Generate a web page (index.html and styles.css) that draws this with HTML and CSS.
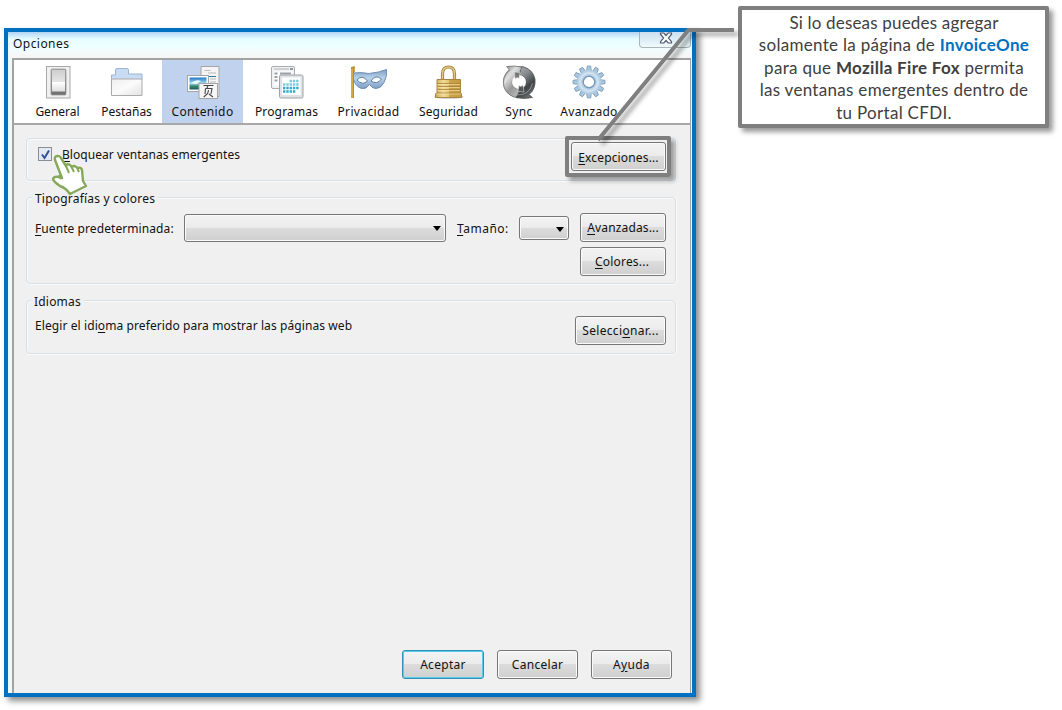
FILE: index.html
```html
<!DOCTYPE html>
<html lang="es">
<head>
<meta charset="utf-8">
<title>Opciones</title>
<link rel="stylesheet" href="styles.css">
</head>
<body>
<main class="page">
  <section class="window">
    <header class="titlebar">
      <h1 class="title">Opciones</h1>
      <div class="close"><svg width="14" height="12" viewBox="0 0 14 12"><path d="M1.500 1h3.300L7 3.500 9.200 1h3.300v1.200L9.400 6l3.100 3.600V11H9.200L7 8.500 4.800 11H1.500V9.600L4.600 6 1.500 2.200z" fill="#fff" stroke="#515a70" stroke-width="1.200"/></svg></div>
    </header>
    <div class="client">
      <nav class="tabs">
        <div class="tab t-general">
          <svg width="34" height="34" viewBox="0 0 34 34"><defs><linearGradient id="sw" x2="0" y2="1"><stop offset="0" stop-color="#cfcfcf"/><stop offset=".55" stop-color="#e4e4e4"/><stop offset=".57" stop-color="#fff"/><stop offset="1" stop-color="#dedede"/></linearGradient><linearGradient id="sb" x2="0" y2="1"><stop offset="0" stop-color="#aaa"/><stop offset="1" stop-color="#6e6e6e"/></linearGradient></defs><rect x="5.500" y="1.500" width="23.500" height="31.500" fill="#f0f0f0" stroke="#a9a9a9"/><rect x="10" y="4" width="15" height="26" rx="1" fill="url(#sb)" stroke="#999" stroke-width=".8"/><rect x="11" y="5" width="13" height="21.500" fill="url(#sw)"/></svg>
          <span>General</span></div>
        <div class="tab t-tabs">
          <svg width="34" height="34" viewBox="0 0 34 34"><defs><linearGradient id="fo" x2="1" y2="1"><stop offset="0" stop-color="#eee"/><stop offset=".5" stop-color="#fbfbfb"/><stop offset="1" stop-color="#e2e2e2"/></linearGradient></defs><path d="M1.500 14.500V10H5.500V5q0-1.500 1.500-1.500H17q1.500 0 1.500 1.500V9H32V14.500z" fill="#c9dcf3" stroke="#9db5d3"/><path d="M1.500 14H32V30.500H1.500z" fill="url(#fo)" stroke="#aaa"/></svg>
          <span>Pestañas</span></div>
        <div class="tab t-content selected">
          <svg width="34" height="34" viewBox="0 0 34 34"><defs><linearGradient id="ph" x2="0" y2="1"><stop offset="0" stop-color="#2078c4"/><stop offset=".5" stop-color="#a8dff5"/><stop offset=".7" stop-color="#3c8c6c"/><stop offset="1" stop-color="#1c5a62"/></linearGradient></defs><path d="M15 1.500h18V31.500H15z" fill="#f4f4f4" stroke="#a5a5a5"/><path d="M18.500 5.500h6M22 8h8M24 14h6M24 17h6" stroke="#bbb"/><path d="M22 11.500h8" stroke="#287e99"/><rect x="1.500" y="10.500" width="21" height="16" fill="#fff" stroke="#a5a5a5"/><rect x="3.500" y="12.500" width="17" height="12" fill="url(#ph)"/><path d="M5 18q5-4 10-2l-5 3z" fill="#effaff"/><rect x="13" y="18.500" width="18.500" height="15" fill="#f6f6f6" stroke="#a5a5a5"/><path d="M17.500 20.500h10M22 20.500l-1 2.500M19.500 23.500h6.500l-1 5.500M19.500 23.500l-.5 5.500M22.500 25l-.8 3.500-4 3.500M23 29l4 3" fill="none" stroke="#444" stroke-width="1.100"/></svg>
          <span>Contenido</span></div>
        <div class="tab t-apps">
          <svg width="34" height="34" viewBox="0 0 34 34"><rect x="1.500" y="1.500" width="23" height="22" rx="1.500" fill="#f0f1f2" stroke="#a9abad"/><path d="M4 4h15" stroke="#c4c4c4" stroke-width="1.500"/><path d="M20 4h3" stroke="#777" stroke-width="1.500"/><rect x="4" y="6.500" width="18" height="14" fill="#fff"/><path d="M4.500 8.500h3M10 8.500h11M4.500 12h3M4.500 15.500h3" stroke="#9a9fa8" stroke-width="1.800"/><rect x="9.500" y="10" width="23.500" height="23" rx="1.500" fill="#dfe3e6" stroke="#9da2a6"/><path d="M12 12.500h18.500v17.500h-18.500z" fill="#fff"/><g stroke="#7ccbdc" stroke-width="2.400" stroke-dasharray="2.400 .9"><path d="M19.500 16h10M13 19.500h16"/></g><g stroke="#35a9cb" stroke-width="2.400" stroke-dasharray="2.400 .9"><path d="M13 23h16M13 26.500h12.500"/></g></svg>
          <span>Programas</span></div>
        <div class="tab t-privacy">
          <svg width="38" height="34" viewBox="0 0 38 34"><defs><linearGradient id="ma" x2="0" y2="1"><stop offset="0" stop-color="#7d9cc0"/><stop offset=".45" stop-color="#b9d2ea"/><stop offset="1" stop-color="#7c9dc2"/></linearGradient></defs><path d="M3 8Q11 7 19 8.500 29 7.500 36.500 4.500q1 6-2.500 13-3 6-8 6-4 0-6.500-4-3 5-8 4-6-2-8-9z" fill="url(#ma)" stroke="#6f8fb5"/><path d="M7 15q5-6 10.500 1-5 5-10.500-1zM21 16q4.500-7 10.500-2-4.500 6-10.500 2z" fill="#fff" stroke="#5d7fa6"/><path d="M2.500 3v30" stroke="#bf8a26" stroke-width="3"/><path d="M2 3v30" stroke="#efc964"/><path d="M1 3l3-1v5" fill="none" stroke="#bf8a26" stroke-width="1.500"/></svg>
          <span>Privacidad</span></div>
        <div class="tab t-security">
          <svg width="34" height="34" viewBox="0 0 34 34"><defs><linearGradient id="lo"><stop offset="0" stop-color="#c9a85a"/><stop offset=".3" stop-color="#f0dc97"/><stop offset=".5" stop-color="#e3c676"/><stop offset=".52" stop-color="#cba44c"/><stop offset="1" stop-color="#c39a42"/></linearGradient></defs><ellipse cx="17" cy="32" rx="15" ry="1.800" fill="#ccc"/><path d="M10.500 15V9q0-7 6-7t6 7v6" fill="none" stroke="#9a7c3d" stroke-width="3.200"/><path d="M10.500 15V9q0-7 6-7t6 7v6" fill="none" stroke="#e3c97e" stroke-width="1.500"/><path d="M5 14.500h23.500v13l1 1.500v3.500h-26v-3.500l1.500-1.500z" fill="url(#lo)" stroke="#a98542"/><path d="M5.500 18.500h22.500M5.500 21.500h22.500M5.500 24.500h22.500M4.500 28h24.500" stroke="#a88039" stroke-width=".8"/><path d="M5.500 19.500h22.500M5.500 22.500h22.500M5.500 25.500h22.500M4.500 29h24.500" stroke="#fae9aa" opacity=".6"/></svg>
          <span>Seguridad</span></div>
        <div class="tab t-sync">
          <svg width="34" height="34" viewBox="0 0 34 34"><defs><linearGradient id="sy" x2=".7" y2="1"><stop offset="0" stop-color="#7b7b7b"/><stop offset=".35" stop-color="#dedede"/><stop offset=".65" stop-color="#999"/><stop offset="1" stop-color="#bbb"/></linearGradient><linearGradient id="sz" x2=".5" y2="1"><stop offset="0" stop-color="#b5b5b5"/><stop offset=".4" stop-color="#85898b"/><stop offset=".75" stop-color="#3e4345"/><stop offset="1" stop-color="#666"/></linearGradient></defs><circle cx="17" cy="17" r="11" fill="none" stroke="#888" stroke-width="10"/><path d="M4.500 1.500Q13 0 21 2.500L14.500 13Q9 14 10.500 20q1.500 4 6.500 4l-1 9Q5 31 2 22-.5 12 7.500 5z" fill="url(#sy)" stroke="#777" stroke-width=".8"/><path d="M20 1.500Q31 4 33 14q1 10-6 15.500l3.500 3Q22 34.500 14 32.500L20 22q5-2 3.500-8-1.500-4-6.500-4z" fill="url(#sz)" stroke="#565b5e" stroke-width=".8"/><circle cx="17" cy="17" r="7" fill="#fff"/><path d="M12.500 7l.5 7 2-1.500 2 1 1-6z" fill="#777" stroke="#eee" stroke-width=".5"/><path d="M22 27l-1-7-2 1.500-2-1-1 6z" fill="#555" stroke="#eee" stroke-width=".5"/><path d="M3.500 18Q4 7 13 4M15 30q13 0 15.500-12" fill="none" stroke="#eee" opacity=".4"/></svg>
          <span>Sync</span></div>
        <div class="tab t-advanced">
          <svg width="34" height="34" viewBox="0 0 34 34"><g fill="#a9c6df" stroke="#7899b7" stroke-width=".8"><path id="tooth" d="M14.500 7l.8-6h3.400l.8 6v20l-.8 6h-3.400l-.8-6z"/><use href="#tooth" transform="rotate(30 17 17)"/><use href="#tooth" transform="rotate(60 17 17)"/><use href="#tooth" transform="rotate(90 17 17)"/><use href="#tooth" transform="rotate(120 17 17)"/><use href="#tooth" transform="rotate(150 17 17)"/></g><circle cx="17" cy="17" r="11.700" fill="#b9d2e8"/><circle cx="17" cy="17" r="9" fill="none" stroke="#d1e3f1" stroke-width="2"/><circle cx="17" cy="17" r="5.800" fill="#fff" stroke="#7899b7" stroke-width="1.400"/></svg>
          <span>Avanzado</span></div>
      </nav>
      <div class="panel">
        <div class="group popups">
          <span class="check"><svg width="11" height="11" viewBox="0 0 11 11"><path d="M2 5.500l2.500 3.500L9 1.500" fill="none" stroke="#31519c" stroke-width="2"/></svg></span>
          <span class="label popup-label"><u>B</u>loquear ventanas emergentes</span>
          <span class="highlight"><button class="btn exceptions"><u>E</u>xcepciones...</button></span>
        </div>
        <div class="group fonts">
          <h2 class="legend lg-fonts">Tipografías y colores</h2>
          <div class="row">
            <span class="label font-label"><u>F</u>uente predeterminada:</span>
            <span class="select big"></span>
            <span class="label size-label"><u>T</u>amaño:</span>
            <span class="select small"></span>
            <div class="stack"><button class="btn b-adv"><u>A</u>vanzadas...</button><button class="btn b-col"><u>C</u>olores...</button></div>
          </div>
        </div>
        <div class="group langs">
          <h2 class="legend lg-lang">Idiomas</h2>
          <div class="row">
            <span class="label lang-label">Elegir el idi<u>o</u>ma preferido para mostrar las páginas web</span>
            <button class="btn b-sel">Selecci<u>o</u>nar...</button>
          </div>
        </div>
        <footer class="actions">
          <button class="btn default">Aceptar</button>
          <button class="btn cancel">Cancelar</button>
          <button class="btn help">A<u>y</u>uda</button>
        </footer>
      </div>
    </div>
  </section>
  <aside class="note">
    <p class="n1">Si lo deseas puedes agregar</p>
    <p class="n2">solamente la página de <b class="brand">InvoiceOne</b></p>
    <p class="n3">para que <b>Mozilla Fire Fox</b> permita</p>
    <p class="n4">las ventanas emergentes dentro de</p>
    <p class="n5">tu Portal CFDI.</p>
  </aside>
  <svg class="leader" width="150" height="125" viewBox="0 0 150 125"><path d="M8 116L98.500 6H144" fill="none" stroke="#7f7f7f" stroke-width="4"/></svg>
  <svg class="hand" width="40" height="46" viewBox="0 0 40 46"><path d="M6 8q-1-4 3-4 2 0 3 2l5 8q1-3 4-1l2 2q2-2 4 0l2 1q3-1 4 2l1 11 3 5-16 8q-4-6-10-8-6-4-7-7 1-3 6-2l3 1z" fill="#fff" stroke="#86a95b" stroke-width="2.400" stroke-linejoin="round"/><path d="M17 14l3 7M22 14l3 6M28 16l2 4M12 27l-2-4" fill="none" stroke="#86a95b" stroke-width="2"/></svg>
</main>
</body>
</html>
```
FILE: styles.css
```css
* { box-sizing: border-box; }
body { margin: 0; background: #fff; }
h1, h2, p { margin: 0; font-weight: 400; }
svg { display: block; }
.page {
  position: relative;
  display: flex;
  align-items: flex-start;
  width: 1062px;
  height: 710px;
  padding: 6px 0 0 4px;
  overflow: hidden;
}
.window {
  flex: none;
  width: 692px;
  height: 669px;
  margin-top: 22px;
  border: 4px solid #0070c0;
  background: #eefafa;
  box-shadow: 4px 4px 6px rgba(0, 0, 0, .45);
  font: 12px/16px "Noto Sans", sans-serif;
  color: #111;
  display: flex;
  flex-direction: column;
}
.titlebar {
  flex: none;
  height: 26px;
  display: flex;
  justify-content: space-between;
  background: linear-gradient(#b2d5f5, #e5fdff 7px, #f0ffff 15px, #f6f6f6 24px);
}
.title { font-size: 12px; line-height: 16px; padding: 4px 0 0 5px; letter-spacing: .45px; }
.close {
  width: 52px;
  height: 16px;
  margin-right: 1px;
  border: 1px solid #aab5b9;
  border-top: 0;
  border-radius: 0 0 4px 4px;
  display: flex;
  justify-content: center;
  padding-left: 2px;
  background: linear-gradient(#cbdff0, #f0fbfb);
}
.client {
  flex: 1;
  margin: 0 1px 0 4px;
  border: 2px solid #a0a3a2;
  border-right-width: 1px;
  border-bottom: 0;
  background: #f0f0f0;
  display: flex;
  flex-direction: column;
}
.tabs {
  flex: none;
  height: 65px;
  padding-left: 10px;
  display: flex;
  background: #fff;
  border-bottom: 2px solid #a8a8a8;
}
.tab {
  flex: none;
  display: flex;
  flex-direction: column;
  align-items: center;
  padding-top: 5px;
  white-space: nowrap;
}
.tab span { margin-top: 5px; }
.selected { background: #c1d2ee; }
.t-general { width: 67px; }
.t-tabs { width: 71px; }
.t-content { width: 81px; letter-spacing: .4px; }
.t-apps { width: 87px; letter-spacing: .15px; }
.t-privacy { width: 77px; letter-spacing: .35px; }
.t-security { width: 83px; letter-spacing: .15px; }
.t-sync { width: 58px; letter-spacing: .4px; }
.t-advanced { width: 82px; letter-spacing: .3px; }
.panel {
  flex: 1;
  display: flex;
  flex-direction: column;
  padding: 13px 15px 14px 12px;
}
.group {
  flex: none;
  width: 650px;
  border: 1px solid #d8e0e6;
  border-radius: 4px;
  box-shadow: inset 1px 1px #fafafa, 0 1px #fafafa, 1px 0 #fafafa;
}
.popups { height: 43px; display: flex; align-items: flex-start; }
.check {
  width: 14px;
  height: 14px;
  margin: 8px 0 0 11px;
  border: 1px solid #8a8f94;
  background: #e2e9f3;
  display: flex;
  align-items: center;
  justify-content: center;
}
.label { white-space: nowrap; }
u { text-underline-offset: 2px; }
.popup-label { margin: 8px 0 0 10px; width: 200px; letter-spacing: .04px; }
.highlight {
  display: flex;
  width: 106px;
  height: 41px;
  margin: -3px 4px 0 auto;
  padding: 2px;
  border: 4px solid #7f7f7f;
  border-radius: 2px;
  box-shadow: 4px 4px 4px rgba(0, 0, 0, .35);
}
.btn {
  flex: none;
  height: 29px;
  padding: 0;
  border: 1px solid #777;
  border-radius: 3px;
  background: linear-gradient(#f3f3f3, #ebebeb 49%, #dcdcdc 50%, #cfcfcf);
  box-shadow: inset 0 0 0 1px #fafafa;
  font: 12px/16px "Noto Sans", sans-serif;
  color: #111;
  white-space: nowrap;
}
.exceptions { width: 95px; padding-top: 2px; letter-spacing: .15px; }
.fonts { height: 87px; margin-top: 16px; }
.langs { height: 54px; margin-top: 16px; }
.legend {
  width: max-content;
  height: 16px;
  margin: -7px 0 0 5px;
  padding: 0 3px;
  background: #f0f0f0;
  font-size: 12px;
  line-height: 16px;
}
.lg-fonts { letter-spacing: .2px; }
.lg-lang { margin-left: 4px; letter-spacing: .2px; }
.row { display: flex; align-items: flex-start; padding-left: 8px; }
.font-label { width: 149px; margin-top: 14px; letter-spacing: .08px; }
.select {
  flex: none;
  border: 1px solid #777;
  border-radius: 3px;
  background: linear-gradient(#f3f3f3, #ebebeb 49%, #dcdcdc 50%, #cfcfcf);
  box-shadow: inset 0 0 0 1px #fafafa;
  display: flex;
  align-items: center;
  justify-content: flex-end;
  padding-right: 4px;
}
.select::after { content: ""; border: 4px solid transparent; border-top: 5px solid #000; border-bottom: 0; }
.big { width: 262px; height: 28px; margin-top: 7px; }
.size-label { width: 62px; margin: 14px 0 0 11px; letter-spacing: .5px; }
.small { width: 50px; height: 24px; margin-top: 9px; padding-top: 3px; }
.stack { display: flex; flex-direction: column; gap: 5px; margin: 6px 0 0 11px; }
.stack .btn { width: 86px; }
.b-adv { letter-spacing: .15px; }
.b-col { letter-spacing: .2px; padding-right: 2px; }
.lang-label { width: 540px; margin-top: 8px; letter-spacing: .09px; }
.b-sel { width: 91px; margin-top: 6px; letter-spacing: .33px; }
.actions { display: flex; justify-content: flex-end; gap: 13px; margin: auto 3px 0 0; }
.actions .btn { width: 81px; letter-spacing: .3px; }
.actions .default { width: 82px; border-color: #348fb5; box-shadow: inset 0 0 0 1px #55cdf0; }
.note {
  flex: none;
  width: 311px;
  height: 122px;
  margin-left: 42px;
  padding: 2px 0 0 1px;
  border: 4px solid #7f7f7f;
  border-radius: 2px;
  background: #fff;
  box-shadow: 4px 4px 5px rgba(0, 0, 0, .4);
  font: 17px/22.4px Lato, sans-serif;
  letter-spacing: .3px;
  color: #404040;
  text-align: center;
  white-space: nowrap;
}
.n1 { letter-spacing: .18px; }
.brand { color: #0070c0; }
.leader { position: absolute; left: 590px; top: 24px; filter: drop-shadow(4px 4px 2px rgba(0, 0, 0, .35)); }
.hand { position: absolute; left: 49px; top: 152px; }
```
